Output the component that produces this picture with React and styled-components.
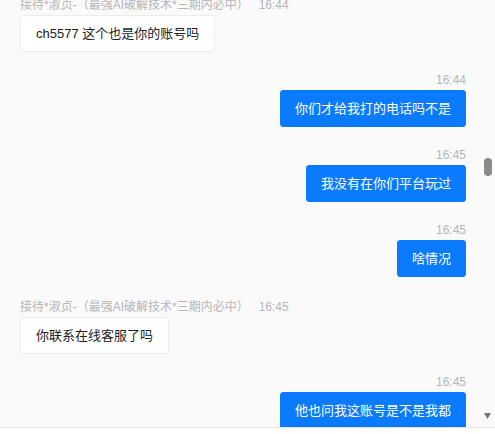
import React from "react";
import styled, { createGlobalStyle } from "styled-components";

const GlobalStyle = createGlobalStyle`
  html, body {
    margin: 0;
    padding: 0;
    background: #fff;
  }
  body {
    font-family: "Liberation Sans", Arial, "Noto Sans CJK SC", sans-serif;
  }
`;

const Frame = styled.div`
  width: 495px;
  height: 434px;
  display: flex;
  flex-direction: column;
  background: #fff;
  overflow: hidden;
`;

const ChatArea = styled.div`
  height: 427px;
  display: flex;
  background: #fafafa;
`;

const Messages = styled.div`
  flex: 1;
  overflow: hidden;
  padding: 0 12px 0 20px;
`;

const List = styled.div`
  display: flex;
  flex-direction: column;
  gap: 21px;
  margin-top: -4px;
`;

const Group = styled.div`
  display: flex;
  flex-direction: column;
  align-items: ${(p) => (p.$mine ? "flex-end" : "flex-start")};
  padding-top: ${(p) => (p.$mine ? "0" : "2px")};
`;

const Meta = styled.div`
  font-size: 12px;
  line-height: 14px;
  height: 14px;
  color: #b6b6b6;
  margin-bottom: 3px;
  white-space: nowrap;
  span {
    margin-left: 10px;
  }
`;

const Bubble = styled.div`
  font-size: 13px;
  line-height: 17px;
  border-radius: 3px;
  white-space: nowrap;
  background: ${(p) => (p.$mine ? "#0a7bfc" : "#fff")};
  color: ${(p) => (p.$mine ? "#fff" : "#222")};
  border: 1px solid ${(p) => (p.$mine ? "#0a7bfc" : "#ececec")};
  padding: ${(p) => (p.$mine ? "9px 14px" : "9px 15px")};
`;

const ScrollTrack = styled.div`
  width: 17px;
  position: relative;
  background: #fafafa;
`;

const Thumb = styled.div`
  position: absolute;
  top: 158px;
  left: 6px;
  width: 8px;
  height: 18px;
  border-radius: 4px;
  background: #8a8a8a;
`;

const ArrowDown = styled.svg`
  position: absolute;
  left: 6px;
  bottom: 8px;
`;

const Footer = styled.div`
  flex: 1;
  border-top: 1px solid #e4e4e4;
  background: #fff;
`;

const agent = "接待*淑贞-（最强AI破解技术*三期内必中）";

const messages = [
  { mine: false, time: "16:44", text: "ch5577 这个也是你的账号吗" },
  { mine: true, time: "16:44", text: "你们才给我打的电话吗不是" },
  { mine: true, time: "16:45", text: "我没有在你们平台玩过" },
  { mine: true, time: "16:45", text: "啥情况" },
  { mine: false, time: "16:45", text: "你联系在线客服了吗" },
  { mine: true, time: "16:45", text: "他也问我这账号是不是我都" },
];

export default function App() {
  return (
    <>
      <GlobalStyle />
      <Frame>
        <ChatArea>
          <Messages>
            <List>
              {messages.map((m, i) => (
                <Group key={i} $mine={m.mine}>
                  <Meta>
                    {m.mine ? (
                      m.time
                    ) : (
                      <>
                        {agent}
                        <span>{m.time}</span>
                      </>
                    )}
                  </Meta>
                  <Bubble $mine={m.mine}>{m.text}</Bubble>
                </Group>
              ))}
            </List>
          </Messages>
          <ScrollTrack>
            <Thumb />
            <ArrowDown width="7" height="6" viewBox="0 0 7 6">
              <polygon points="0,0 7,0 3.5,6" fill="#777" />
            </ArrowDown>
          </ScrollTrack>
        </ChatArea>
        <Footer />
      </Frame>
    </>
  );
}
